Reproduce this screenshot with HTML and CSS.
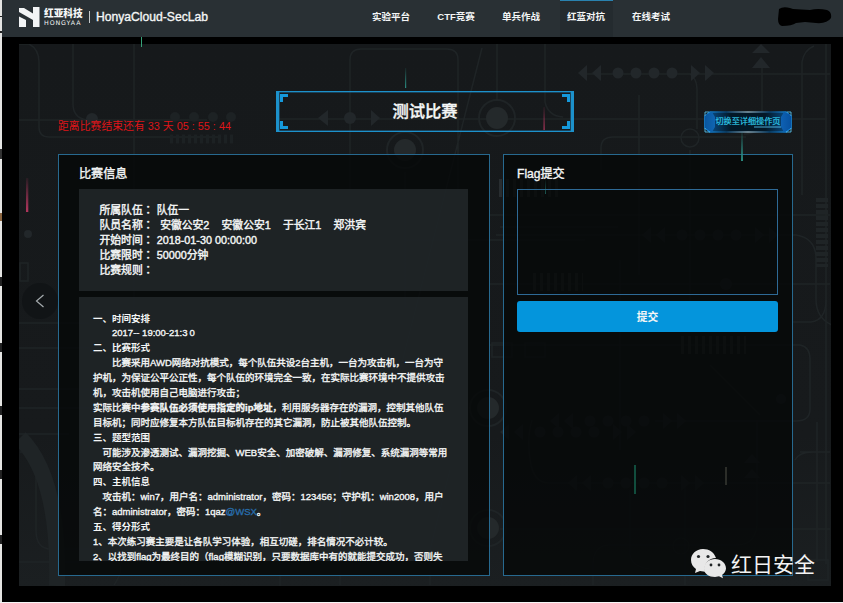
FILE: index.html
```html
<!DOCTYPE html>
<html lang="zh-CN">
<head>
<meta charset="utf-8">
<title>HonyaCloud-SecLab</title>
<link rel="stylesheet" href="styles.css">
</head>
<body>
<header class="topbar">
  <svg class="logo" viewBox="0 0 21 20" fill="#f2f4f5"><path d="M0 1h5l9 5.500V0h6.500v20H14v-7L0 5z"/><path d="M0 9.500l7 3.500v7H0z"/></svg>
  <div class="company"><b>红亚科技</b><span>HONGYAA</span></div>
  <i class="divider"></i>
  <span class="brand">HonyaCloud-SecLab</span>
  <nav class="nav"><a>实验平台</a><a>CTF竞赛</a><a>单兵作战</a><a class="active">红蓝对抗</a><a>在线考试</a></nav>
  <svg class="user" viewBox="0 0 54 20" preserveAspectRatio="none"><path d="M1 2Q5-1 12 1L15 2 32 3Q40 1 49 3Q54 5 53 11Q49 17 38 16L27 15 18 16Q14 19 4 19Q0 18 0 12z"/></svg>
</header>
<div class="frame">
<main class="stage">
  <svg class="circuit" viewBox="19 44 812 542" fill="none" stroke="#1f2426" stroke-width="1.500">
    <defs>
      <g id="arrows"><path fill="#22272a" stroke="none" d="M0 0l9-8v16zM14 0l9-8v16zM113-8l9 8-9 8zM127-8l9 8-9 8z"/><g fill="#22272a" stroke="none"><circle cx="40" r="5.500"/><circle cx="58" r="5.500"/><circle cx="76" r="5.500"/><circle cx="94" r="5.500"/></g></g>
      <g id="node"><circle r="18" stroke-width="2"/><circle r="11" fill="#24292b" stroke="none"/></g>
    </defs>
    <path d="M19 44h10q10 5 10 18v65q0 10 10 10h170M73 44v60q0 14 14 16h120M134 44v310M19 120h180M277 119h550M350 195V60q0-11 11-11h86q11 0 11 11v134M482 48L395 390M497 44v55M516 119h65M580 74h250M690 74q7 5 7 15v40M639 95v180M601 170v-22q0-11 12-11h133M762 66v50q0 18-18 18M802 195V62q2-12 12-16M826 44v520M545 44v58q3 14 18 15"/>
    <path d="M500 227h118M490 215h340M496 235h300q20 3 20 24v40q0 20 18 27M793 322h18q15-2 15-22M490 284h340M490 345h310q10 2 10 14v50q0 12-14 12H655M532 420q-6 20-1 45 4 18 18 18h280M620 260v190M690 150v170M757 420v105q-2 20-20 20H610q-17 0-17 20v20M630 490v65q2 12 20 14M685 480v105M650 483h180M500 529h330M800 452h30M817 422v140M795 460q4-8 18-8h17M710 365l50 50"/>
    <path d="M36 450v80q0 19 15 19h60M20 452h12q8 3 8 20M19 323h70M19 348h80M19 389h70M19 408h75M19 434h50M19 562h100q5 9-5 23M280 450v140M340 400v185M450 470l-20 80v35M405 172v135M405 240h180"/>
    <path stroke-width="16" d="M20 438Q60 478 57 586"/>
    <use href="#node" x="497" y="118"/><use href="#node" x="405" y="150"/><use href="#node" x="488" y="408"/><use href="#node" x="488" y="528"/>
    <use href="#arrows" x="578" y="73"/><use href="#arrows" x="550" y="421"/><use href="#arrows" x="568" y="483"/>
    <use href="#arrows" x="642" y="235"/><use href="#arrows" x="500" y="432"/>
    <g fill="#22272a" stroke="none"><path d="M752 53l9-9 9 9zM752 68l9-11 9 11zM744 463l8-9 8 9zM744 478l8-9 8 9zM318 118l10-8v16zM371 110l9 8-9 8z"/><circle cx="350" cy="118" r="6"/><circle cx="92" cy="119" r="6"/><circle cx="726" cy="284" r="6"/><circle cx="28" cy="234" r="4"/><circle cx="781" cy="399" r="5"/></g>
    <circle cx="690" cy="138" r="9"/><circle cx="681" cy="546" r="8"/>
    <path stroke="#1c2123" stroke-width="9" stroke-dasharray="3 3" d="M170 139h66"/>
    <path stroke="#282d30" stroke-width="18" stroke-dasharray="3 4" d="M533 282h50M681 345h65M499 188h62"/><path stroke-width="12" stroke-dasharray="4 2" d="M822 198v69"/><g fill="#1d2224" stroke="none"><circle cx="175" cy="117" r="5"/><circle cx="194" cy="117" r="5"/><circle cx="213" cy="117" r="5"/><circle cx="231" cy="117" r="5"/></g>
    <path d="M492 343h20v14h-20zM525 343h20v14h-20zM20 263h8v18h-8zM808 560h20v20h-20z"/>
  </svg>
  <div class="hero">
    <p class="timer">距离比赛结束还有 33 天 05 : 55 : 44</p>
    <h1 class="title"><i></i><span>测试比赛</span></h1>
    <div class="switch">
      <svg viewBox="0 0 88 22"><defs><linearGradient id="edge"><stop stop-color="#168ee8"/><stop offset=".25" stop-color="#0a426d"/><stop offset=".5" stop-color="#86a1af"/><stop offset=".75" stop-color="#0a426d"/><stop offset="1" stop-color="#168ee8"/></linearGradient><linearGradient id="gem"><stop stop-color="#0a569e"/><stop offset=".5" stop-color="#2596f4"/><stop offset="1" stop-color="#0751a0"/></linearGradient><linearGradient id="body"><stop stop-color="#0b5798"/><stop offset=".3" stop-color="#031827"/><stop offset=".7" stop-color="#031827"/><stop offset="1" stop-color="#0b5798"/></linearGradient></defs><path d="M6 1h76l5 4v12l-5 4H6l-5-4V5z" fill="url(#body)" stroke="url(#edge)" stroke-width="1.500"/><path d="M1 4l7-3 3 5v10l-3 5-7-4zM87 4l-7-3-3 5v10l3 5 7-4z" fill="url(#gem)"/><path d="M1 5V1h4M83 1h4v4M1 17v4h5M82 21h5v-4M50 16h27" fill="none" stroke="#5dcfff" stroke-opacity=".8"/></svg>
      <span>切换至详细操作页</span>
    </div>
  </div>
  <div class="panels">
    <section class="panel info">
      <h2>比赛信息</h2>
      <div class="summary">
        <p>所属队伍<b>：</b>队伍一</p>
        <p>队员名称<b>：</b><span class="member">安徽公安2</span><span class="member">安徽公安1</span><span class="member">于长江1</span><span class="member">郑洪宾</span></p>
        <p>开始时间<b>：</b>2018-01-30 00:00:00</p>
        <p>比赛限时<b>：</b>50000分钟</p>
        <p>比赛规则<b>：</b></p>
      </div>
      <div class="rules">
        <p class="strong">一、时间安排</p>
        <p class="in2">2017-- 19:00-21:3<span class="zero">0</span></p>
        <p class="strong">二、比赛形式</p>
        <p class="in2">比赛采用AWD网络对抗模式，每个队伍共设2台主机，一台为攻击机，一台为守</p>
        <p>护机，为保证公平公正性，每个队伍的环境完全一致，在实际比赛环境中不提供攻击</p>
        <p>机，攻击机使用自己电脑进行攻击；</p>
        <p>实际比赛中<b>参赛队伍必须使用指定的ip地址</b>，利用服务器存在的漏洞，控制其他队伍</p>
        <p>目标机；同时应修复本方队伍目标机存在的其它漏洞，防止被其他队伍控制。</p>
        <p class="strong">三、题型范围</p>
        <p class="in1">可能涉及渗透测试、漏洞挖掘、WEB安全、加密破解、漏洞修复、系统漏洞等常用</p>
        <p>网络安全技术。</p>
        <p class="strong">四、主机信息</p>
        <p class="in1">攻击机：win7，用户名：administrator，密码：123456；守护机：win2008，用户</p>
        <p>名：administrator，密码：1qaz<a>@WSX</a>。</p>
        <p class="strong">五、得分形式</p>
        <p>1、本次练习赛主要是让各队学习体验，相互切磋，排名情况不必计较。</p>
        <p>2、以找到flag为最终目的（flag模糊识别，只要数据库中有的就能提交成功，否则失</p>
      </div>
    </section>
    <section class="panel flag">
      <h2>Flag提交</h2>
      <div class="field"></div>
      <div class="submit">提交</div>
    </section>
  </div>
  <svg class="sparks" viewBox="19 44 812 542">
    <defs>
      <linearGradient id="fg" x1="0" x2="0" y1="0" y2="1"><stop stop-color="#2a8a80" stop-opacity=".1"/><stop offset="1" stop-color="#2a8a80"/></linearGradient>
      <linearGradient id="fr" x1="0" x2="0" y1="0" y2="1"><stop stop-color="#b2365d" stop-opacity=".1"/><stop offset="1" stop-color="#b2365d"/></linearGradient>
    </defs>
    <path fill="url(#fg)" d="M405 68h1.200v20H405z"/>
    <path fill="url(#fg)" d="M741 132h2v29h-2z"/>
    <path fill="#114d3d" d="M634 465h2v29h-2z"/>
    <path fill="url(#fg)" fill-opacity=".6" d="M545 180h1v14h-1z"/>
    <path fill="url(#fr)" d="M543.500 107h1.200v23h-1.200z"/>
    <path fill="url(#fr)" d="M26 178h2.300v34H26z"/>
    <path fill="#4f5146" d="M725.500 467h1v18h-1z"/>
  </svg>
  <div class="back"><svg viewBox="0 0 10 14" fill="none" stroke="#a5abae" stroke-width="1.200"><path d="M8.500 1L1.500 7l7 6"/></svg></div>
</main>
</div>
<i class="spark"></i>
<div class="watermark">
  <svg viewBox="0 0 35 30" fill="#e8e8e8"><path d="M12 0C5 0 0 5 0 11c0 4 2 7 5 9l-1 4 5-2 5 .7C12 15 18 9 25 9 23 3 18 0 12 0z"/><path d="M24 10c-6 0-11 4-11 9.500S18 28 24 28l4-.7 4 2-1-3.300c2-1.500 4-4 4-6.500C35 14 30 10 24 10z"/><g fill="#202426"><circle cx="7.500" cy="7.500" r="1.600"/><circle cx="17" cy="7.500" r="1.600"/><circle cx="20" cy="16" r="1.400"/><circle cx="28" cy="16" r="1.400"/></g></svg>
  <span>红日安全</span>
</div>
<i class="edge"></i>
</body>
</html>
```
FILE: styles.css
```css
* { box-sizing: border-box; }
body {
  margin: 0;
  width: 843px;
  height: 603px;
  overflow: hidden;
  background: #000;
  color: #f4f6f6;
  font-family: "Liberation Sans", "Noto Sans CJK SC", sans-serif;
  position: relative;
  border-bottom: 1px solid #f5f5f5;
}
p, h1, h2 { margin: 0; font-weight: normal; white-space: nowrap; }
.topbar {
  display: flex;
  align-items: center;
  height: 37px;
  padding: 0 11px 3px 19px;
  background: #293034;
}
.logo { width: 21px; height: 20px; flex: none; }
.company { width: 39px; margin-left: 4px; display: flex; flex-direction: column; }
.company b { font-size: 9.7px; line-height: 11px; font-weight: 900; white-space: nowrap; }
.company span { font-size: 6.3px; line-height: 7px; letter-spacing: 0.9px; font-family: "DejaVu Sans", sans-serif; white-space: nowrap; }
.divider { width: 1px; height: 12px; background: #c5c9cb; margin: 0 6px; }
.brand { width: 112px; font-size: 12.15px; -webkit-text-stroke: 0.35px; white-space: nowrap; }
.nav { display: flex; height: 37px; margin: 0 auto 0 156.5px; position: relative; top: 1.5px; }
.nav a {
  width: 53px;
  margin-right: 12px;
  line-height: 33px;
  font-size: 9.5px;
  font-weight: bold;
  text-align: center;
  white-space: nowrap;
}
.nav .active { background: #242b2f; border-top: 1px solid #2981ae; line-height: 31px; }
.user { width: 54px; height: 20px; }
.frame { padding: 7px 12px 16px 19px; height: 565px; }
.stage {
  position: relative;
  height: 542px;
  background: linear-gradient(#16191b, #171a1c 72%, #1b1f21);
}
.circuit, .sparks { position: absolute; inset: 0; width: 812px; height: 542px; }
.hero {
  position: relative;
  display: flex;
  height: 109.5px;
  padding: 47px 39px 0;
}
.timer { width: 218px; padding-top: 27px; line-height: 16px; font-size: 10.85px; color: #dd1519; }
.title {
  position: relative;
  width: 298px;
  height: 41px;
  border: solid #1c91cb;
  border-width: 1px 3px;
  box-shadow: inset 0 0 0 0.5px #1c6f9c;
  line-height: 38px;
  text-align: center;
  font-size: 16.3px;
  font-weight: 500;
  -webkit-text-stroke: 0.35px;
}
.title i {
  position: absolute;
  inset: 2px 1px;
  --c: #1599db;
  background:
    linear-gradient(var(--c) 0 0) 0 0 / 8px 3px, linear-gradient(var(--c) 0 0) 0 0 / 3px 8px,
    linear-gradient(var(--c) 0 0) 100% 0 / 8px 3px, linear-gradient(var(--c) 0 0) 100% 0 / 3px 8px,
    linear-gradient(var(--c) 0 0) 0 100% / 8px 3px, linear-gradient(var(--c) 0 0) 0 100% / 3px 8px,
    linear-gradient(var(--c) 0 0) 100% 100% / 8px 3px, linear-gradient(var(--c) 0 0) 100% 100% / 3px 8px;
  background-repeat: no-repeat;
}
.switch { display: grid; width: 88px; height: 22px; margin: 20px 0 0 130px; flex: none; }
.switch > * { grid-area: 1 / 1; }
.switch svg { width: 88px; height: 22px; }
.switch span { z-index: 1; font-size: 8.15px; line-height: 21px; text-align: center; color: #31cfee; -webkit-text-stroke: 0.15px; white-space: nowrap; }
.panels { position: relative; display: flex; gap: 13px; margin-left: 39px; }
.panel { height: 422px; border: 1px solid #27698f; background: rgba(5, 7, 8, 0.8); }
.panel h2 { font-size: 12.1px; line-height: 18px; -webkit-text-stroke: 0.35px; }
.info { width: 432px; padding: 10px 20px 0; }
.flag { width: 290px; padding: 10px 14px 0 13px; }
.summary {
  width: 389px;
  height: 102px;
  margin-top: 6px;
  padding: 14.5px 20.5px 0;
  background: rgba(35, 40, 43, 0.84);
  font-size: 10.8px;
  line-height: 14.9px;
  -webkit-text-stroke: 0.4px;
}
.summary p { height: 14.9px; }
.summary b { display: inline-block; width: 14px; font-family: "Noto Sans CJK TC", sans-serif; font-weight: normal; line-height: 12px; }
.member { margin-left: 3.5px; margin-right: 8.7px; }
.rules {
  width: 389px;
  height: 264px;
  margin-top: 6px;
  padding: 15px 14px 0;
  overflow: hidden;
  background: rgba(35, 40, 43, 0.84);
  font-size: 9.5px;
  line-height: 14.9px;
  -webkit-text-stroke: 0.35px;
}
.rules p { height: 14.9px; }
.rules .strong { font-weight: 600; -webkit-text-stroke: 0; }
.rules .in1 { padding-left: 9.5px; }
.rules .in2 { padding-left: 19px; }
.rules a { color: #286dab; }
.zero { margin-left: 2px; }
.field { height: 106px; margin-top: 6px; border: 1px solid #2e6a96; }
.submit {
  height: 31.5px;
  margin-top: 6px;
  border-radius: 3px;
  background: #0495dc;
  line-height: 33px;
  text-align: center;
  font-size: 10.8px;
  font-weight: bold;
}
.back {
  position: absolute;
  left: 3px;
  top: 239px;
  width: 36px;
  height: 36px;
  border-radius: 50%;
  background: rgba(10, 13, 14, 0.4);
  display: grid;
  place-items: center;
}
.back svg { width: 10px; height: 14px; }
.spark { position: absolute; left: 141px; top: 37px; width: 1px; height: 10px; background: #36a178; }
.watermark { position: absolute; left: 691px; top: 549px; display: flex; gap: 5px; }
.watermark svg { width: 35px; height: 30px; }
.watermark span { font-size: 21px; line-height: 32px; color: #f3f3f3; white-space: nowrap; }
.edge {
  position: absolute;
  left: 0;
  top: 0;
  width: 2px;
  height: 603px;
  background:
    linear-gradient(#222 0 0) 0 16px / 2px 1px, linear-gradient(#222 0 0) 0 31px / 2px 2px,
    linear-gradient(#333 0 0) 0 149px / 2px 10px, linear-gradient(#8b6540 0 0) 0 213px / 2px 8px,
    linear-gradient(#222 0 0) 0 277px / 2px 9px, linear-gradient(#222 0 0) 0 343px / 2px 9px,
    linear-gradient(#222 0 0) 0 406px / 2px 9px, linear-gradient(#222 0 0) 0 470px / 2px 9px,
    linear-gradient(#222 0 0) 0 535px / 2px 9px, #e4e4e2;
  background-repeat: no-repeat;
}
```
